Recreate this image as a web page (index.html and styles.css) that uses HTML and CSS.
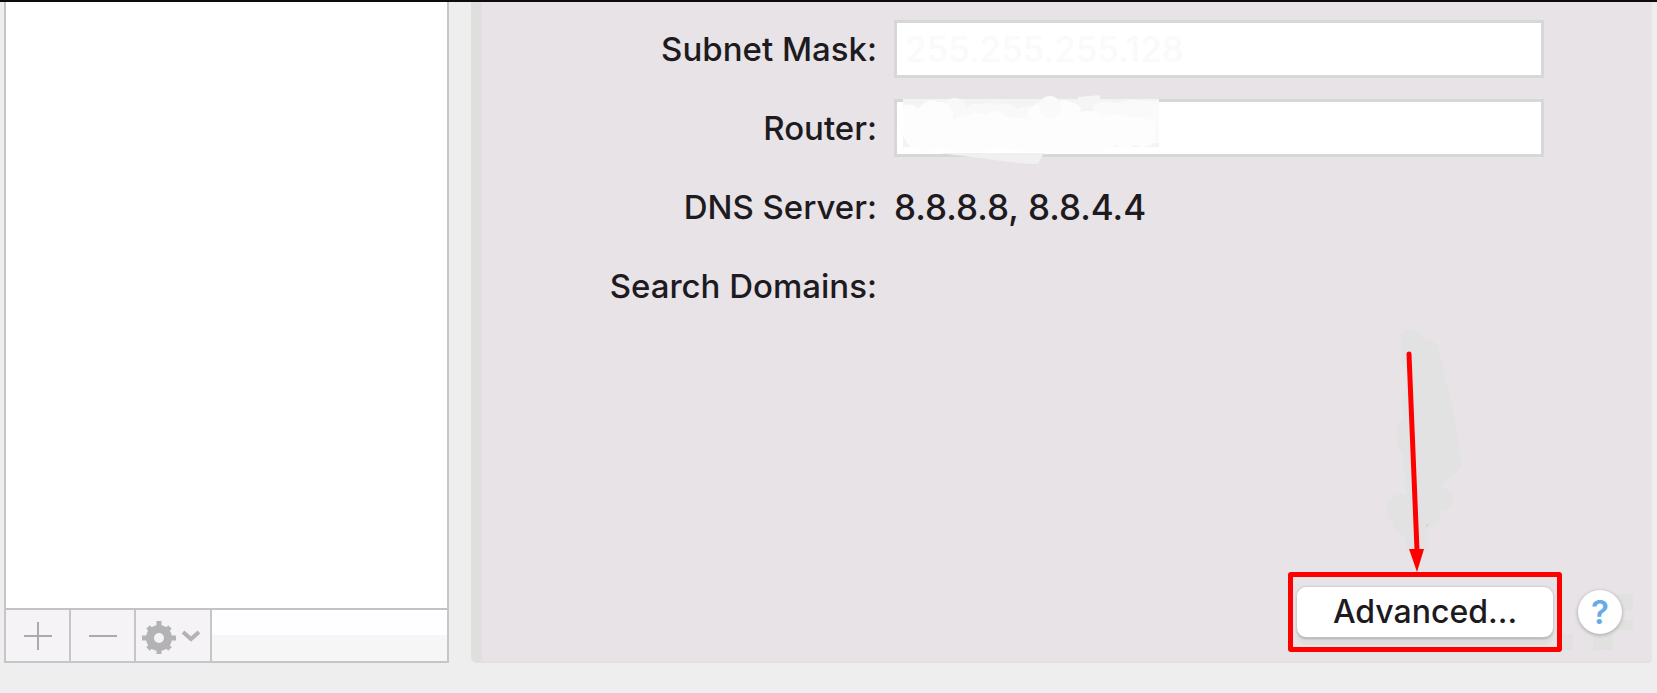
FILE: index.html
```html
<!DOCTYPE html>
<html lang="en">
<head>
  <meta charset="UTF-8">
  <meta name="viewport" content="width=device-width, initial-scale=1">
  <title>Network</title>
  <link rel="stylesheet" href="styles.css">
</head>
<body>
  <aside class="sidebar">
    <div class="service-list"></div>
    <div class="toolbar">
      <button type="button" class="tool" aria-label="Add service">
        <svg width="30" height="30" viewBox="0 0 30 30"><path d="M1 15h28M15 1v28" stroke="#aaaaad" stroke-width="2"/></svg>
      </button>
      <button type="button" class="tool" aria-label="Remove service">
        <svg width="30" height="30" viewBox="0 0 30 30"><path d="M1 15h28" stroke="#aaaaad" stroke-width="2"/></svg>
      </button>
      <button type="button" class="tool tool-menu" aria-label="Service options">
        <svg width="64" height="36" viewBox="0 0 64 36" fill="none">
          <circle cx="18" cy="20" r="9" stroke="#b3b3b6" stroke-width="8"/>
          <path d="M18 10V3M18 30v7M8 20H1M28 20h7M11 13L7 9M25 27l4 4M25 13l4-4M11 27l-4 4" stroke="#b3b3b6" stroke-width="5"/>
          <path d="M42 14l8 7 8-7" stroke="#b3b3b6" stroke-width="4"/>
        </svg>
      </button>
      <div class="toolbar-rest"></div>
    </div>
  </aside>

  <main class="panel">
    <form class="settings">
      <label for="subnet">Subnet Mask:</label>
      <input type="text" id="subnet" value="255.255.255.128">

      <label for="router">Router:</label>
      <div class="router-field">
        <input type="text" id="router">
        <svg class="router-smudge" width="270" height="68" viewBox="0 0 270 68">
          <path d="M0 2h256v48H0z" fill="#f4f4f5"/>
          <path d="M35 56h106l-6 11q-20 0-50-5z" fill="#f1f0f1"/>
          <circle cx="52" cy="12" r="11" fill="#f9f9f9"/>
          <path d="M60 14q8-10 17-6 10-4 18 0 12-4 20 4 10-6 20 0v20H60z" fill="#f9f9f9"/>
          <path d="M175 0l22-2v14h-22z" fill="#f5f5f5"/>
          <path d="M190 8q12-6 24-2 16-5 26-2h16v42h-66z" fill="#fafafa"/>
          <path d="M0 9q8-4 15 3 10-12 20-7 10-2 15 12v6q6-4 12-3 12-8 20-2 12-8 22 2l22 2q-4-10 6-14 8-6 16 2 10-10 20-5 10 2 10 10 10-4 22 4 16-4 26 2 12-3 26 4v20q-10 8-20 3-10 6-20 0-10 8-22 6l-50 1-44-3q-30 6-60 0-20 6-30-4Q-2 40 0 30z" fill="#fdfdfd"/>
          <circle cx="147" cy="10" r="11" fill="#fafafa"/>
        </svg>
      </div>

      <span class="label">DNS Server:</span>
      <span class="value">8.8.8.8, 8.8.4.4</span>

      <span class="label">Search Domains:</span>
      <span class="value"></span>
    </form>

    <div class="actions">
      <div class="callout">
        <button type="button" class="advanced">Advanced...</button>
        <svg class="arrow" width="100" height="252" viewBox="0 0 100 252">
          <path d="M21 17q-1-7 11-7 9 0 11 9 14 1 16 12l15 65 8 50-22 20q16 4 12 18-4 6-12 7 1 13-12 17v24H28q-4-8-2-16-13-4-13-13-9-7-6-18 6-13 20-11-5-10-1-20-6-8-2-18-9-12-7-25 3-10 7-12-5-15 0-23 2-10 4-26-8-4-7-13z" fill="#e1e2e1"/>
          <path d="M46 206l3-2" stroke="#c5c5df"/>
          <path d="M29 34L37 230" stroke="#f00" stroke-width="5" stroke-linecap="round"/>
          <path d="M29 229h15l-7 23z" fill="#f00"/>
        </svg>
      </div>
      <div class="help-area">
        <svg class="help-smudge" width="90" height="70" viewBox="0 0 90 70" fill="#e1e1e0">
          <path d="M12 53h16v16H12zM48 53h20v16H48zM68 13h20v17H68zM68 39h20v10H68z"/>
        </svg>
        <button type="button" class="help">?</button>
      </div>
    </div>
  </main>
</body>
</html>
```
FILE: styles.css
```css
* {
  box-sizing: border-box;
}
body {
  margin: 0;
  min-height: 100vh;
  display: flex;
  gap: 22px;
  padding: 0 5px 30px 4px;
  border-top: 2px solid #0d0c0d;
  background-color: #eeeeee;
  color: #1d1a20;
  font-family: Inter, "Liberation Sans", sans-serif;
  font-size: 33px;
  font-weight: 500;
}
button,
input {
  margin: 0;
  font: inherit;
  color: inherit;
}

/* service list */
.sidebar {
  flex: none;
  width: 445px;
  display: flex;
  flex-direction: column;
  border: 2px solid #c6c6ca;
  border-top: none;
}
.service-list {
  flex: 1;
  background-color: #fff;
}
.toolbar {
  display: flex;
  height: 53px;
  border-top: 2px solid #c3c3c7;
}
.tool {
  width: 65px;
  padding: 0;
  display: flex;
  align-items: center;
  justify-content: center;
  border: none;
  border-right: 2px solid #c6c6ca;
  background-color: #f5f3f6;
}
.tool-menu {
  width: 76px;
}
.toolbar-rest {
  flex: 1;
  background: linear-gradient(#fefdff 50%, #f7f6f7 50%);
}

/* settings */
.panel {
  flex: 1;
  display: flex;
  flex-direction: column;
  justify-content: space-between;
  padding: 18px 108px 24px 0;
  border-left: 11px solid #dfdfde;
  border-bottom: 2px solid #e1e1e1;
  border-radius: 0 0 4px 6px;
  background-color: #e7e3e7;
}
.settings {
  display: grid;
  grid-template-columns: 395px 1fr;
  grid-auto-rows: 58px;
  gap: 21px 17px;
  align-items: center;
}
.settings label,
.label {
  text-align: right;
}
.settings input {
  display: block;
  width: 100%;
  height: 58px;
  padding: 0 8px;
  border: 3px solid #d6d7d9;
  background-color: #fff;
}
.value,
#subnet {
  font-size: 35px;
}
#subnet {
  color: #fafafa;
}
.router-field {
  position: relative;
}
.router-smudge {
  position: absolute;
  left: 9px;
  top: -2px;
  overflow: visible;
  pointer-events: none;
}

/* bottom buttons */
.actions {
  display: flex;
  justify-content: flex-end;
  align-items: center;
  gap: 25px;
  margin-right: -78px;
}
.callout {
  position: relative;
  z-index: 1;
}
.callout::after {
  content: "";
  position: absolute;
  inset: -15px -9px;
  border: 5px solid #f00;
  border-radius: 3px;
  pointer-events: none;
}
.advanced {
  display: block;
  width: 256px;
  height: 50px;
  padding: 0;
  font-size: 32px;
  line-height: 48px;
  border: none;
  border-radius: 9px;
  background-color: #fff;
  box-shadow: 0 0 2px 1px #cfccd0, 0 2px 2px #a9a6aa, 0 8px 0 #dededc;
}
.arrow {
  position: absolute;
  left: 83px;
  bottom: 65px;
  pointer-events: none;
}
.help-area {
  position: relative;
}
.help-smudge {
  position: absolute;
  left: -33px;
  top: -9px;
  overflow: visible;
}
.help {
  position: relative;
  display: block;
  width: 44px;
  height: 44px;
  padding: 0;
  border: none;
  border-radius: 50%;
  background-color: #fff;
  box-shadow: 0 1px 3px 1px #bbb8bc;
  color: #67abe8;
  font-weight: 600;
  line-height: 44px;
}
```
